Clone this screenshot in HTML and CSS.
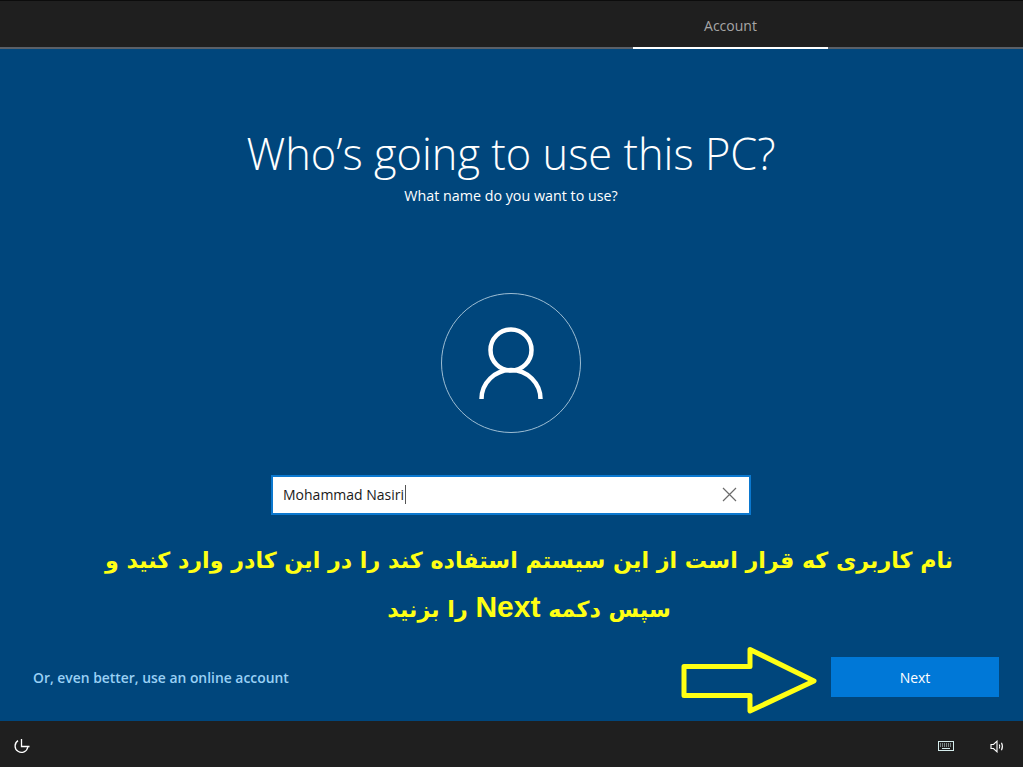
FILE: index.html
```html
<!DOCTYPE html>
<html lang="en">
<head>
  <meta charset="UTF-8">
  <meta name="viewport" content="width=device-width, initial-scale=1.0">
  <title>Who's going to use this PC?</title>
  <link rel="stylesheet" href="styles.css">
</head>
<body>
  <header class="top-bar">
    <div class="step-tab">Account</div>
  </header>

  <main class="content">
    <h1 class="title">Who’s going to use this PC?</h1>
    <p class="subtitle">What name do you want to use?</p>

    <div class="avatar">
      <svg width="66" height="74" viewBox="0 0 66 74" fill="none" stroke="#ffffff" stroke-width="4.5">
        <circle cx="33" cy="24" r="20.5"></circle>
        <path d="M3.5 73 A29.5 29 0 0 1 62.5 73"></path>
      </svg>
    </div>

    <div class="name-box">
      <span class="name-text">Mohammad Nasiri</span><span class="caret"></span>
      <svg class="clear-icon" width="15" height="15" viewBox="0 0 15 15" stroke="#6b6b6b" stroke-width="1.2">
        <path d="M1 1 L14 14 M14 1 L1 14"></path>
      </svg>
    </div>

    <p class="note" dir="rtl" lang="fa">نام کاربری که قرار است از این سیستم استفاده کند را در این کادر وارد کنید و سپس دکمه <span class="note-en">Next</span> را بزنید</p>

    <div class="actions">
      <a class="online-link" href="#">Or, even better, use an online account</a>
      <button class="next-btn">Next</button>
      <svg class="arrow" width="138" height="72" viewBox="0 0 138 72" fill="none" stroke="#ffff14" stroke-width="5" stroke-linejoin="round">
        <path d="M3 20.5 L69 20.5 L69 3.5 L133 35 L69 65 L69 49.5 L3 49.5 Z"></path>
      </svg>
    </div>
  </main>

  <footer class="bottom-bar">
    <svg class="ease-icon" width="18" height="18" viewBox="0 0 18 18" fill="none" stroke="#ffffff" stroke-width="1.3">
      <path d="M5 3.6 A6.4 6.4 0 1 0 14.8 10"></path>
      <path d="M8.5 2 L8.5 9.5 L16.5 9.5"></path>
    </svg>
    <div class="tray">
      <svg width="16" height="10" viewBox="0 0 16 10" fill="none" stroke="#d5ecec" stroke-width="1">
        <rect x="0.5" y="0.5" width="15" height="9"></rect>
        <path d="M2 3 H14 M2 5 H14" stroke-dasharray="1 1"></path>
        <path d="M4 7.5 H12"></path>
      </svg>
      <svg width="15" height="13" viewBox="0 0 15 13" fill="none" stroke="#ffffff" stroke-width="1.1">
        <path d="M1 4.5 H3.5 L7 1.2 V11.8 L3.5 8.5 H1 Z"></path>
        <path d="M9.3 4.5 Q10.3 6.5 9.3 8.5"></path>
        <path d="M11.5 2.8 Q13.4 6.5 11.5 10.2"></path>
      </svg>
    </div>
  </footer>
</body>
</html>
```

FILE: styles.css
```css
/* Page frame */
html, body {
  height: 100%;
}

body {
  margin: 0;
  display: flex;
  flex-direction: column;
  font-family: "Open Sans", "Liberation Sans", sans-serif;
  background-color: #00467c;
  color: #ffffff;
  overflow: hidden;
}

/* Top step bar */
.top-bar {
  height: 46px;
  flex: none;
  display: flex;
  justify-content: flex-end;
  padding-right: 195px;
  background-color: #1f1f1f;
  border-top: 1px solid #0c0c0c;
  border-bottom: 2px solid #5a6068;
}

.step-tab {
  width: 195px;
  height: 48px;
  box-sizing: border-box;
  padding-top: 3px;
  border-bottom: 2px solid #ffffff;
  display: flex;
  align-items: center;
  justify-content: center;
  font-size: 14px;
  color: #a6a6a6;
}

/* Main area */
.content {
  flex: 1;
  display: flex;
  flex-direction: column;
  align-items: center;
  padding: 0 24px 24px 24px;
  min-height: 0;
}

.title {
  margin: 72px 1px 0 0;
  font-size: 43.4px;
  line-height: 65px;
  font-weight: 300;
}

.subtitle {
  margin: 0 1px 0 0;
  font-size: 14.3px;
  line-height: 20px;
}

.avatar {
  width: 138px;
  height: 138px;
  margin: 87px 1px 0 0;
  border: 1px solid #9dbdd3;
  border-radius: 50%;
  display: flex;
  align-items: center;
  justify-content: center;
}

.name-box {
  width: 480px;
  height: 40px;
  box-sizing: border-box;
  margin: 42px 1px 0 0;
  display: flex;
  align-items: center;
  padding: 0 2px 2px 10px;
  background-color: #ffffff;
  border: 2px solid #0b78cf;
  color: #1a1a1a;
  font-size: 14px;
}

.caret {
  width: 1px;
  height: 19px;
  margin-left: 1px;
  background-color: #555555;
}

.clear-icon {
  margin-left: auto;
  margin-right: 10px;
}

.note {
  width: 870px;
  margin: 21px 0 0 35px;
  text-align: center;
  font-family: "DejaVu Sans", sans-serif;
  font-size: 22.2px;
  line-height: 49px;
  font-weight: bold;
  color: #ffff14;
}

.note-en {
  font-family: "Liberation Sans", sans-serif;
  font-size: 30px;
  line-height: 1;
}

.actions {
  position: relative;
  align-self: stretch;
  margin: auto 0 0 9px;
  display: flex;
  align-items: center;
  justify-content: space-between;
}

.online-link {
  font-size: 13.9px;
  font-weight: 600;
  color: #99d0f5;
  text-decoration: none;
}

.next-btn {
  width: 168px;
  height: 40px;
  border: none;
  background-color: #0078d7;
  color: #ffffff;
  font-family: inherit;
  font-size: 14px;
}

/* Hand drawn arrow over the page */
.arrow {
  position: absolute;
  right: 180px;
  top: -11px;
}

/* Bottom bar */
.bottom-bar {
  height: 46px;
  box-sizing: border-box;
  flex: none;
  display: flex;
  align-items: center;
  justify-content: space-between;
  padding: 4px 18px 0 13px;
  background-color: #1f1f1f;
}

.tray {
  display: flex;
  align-items: center;
  gap: 36px;
}
```
